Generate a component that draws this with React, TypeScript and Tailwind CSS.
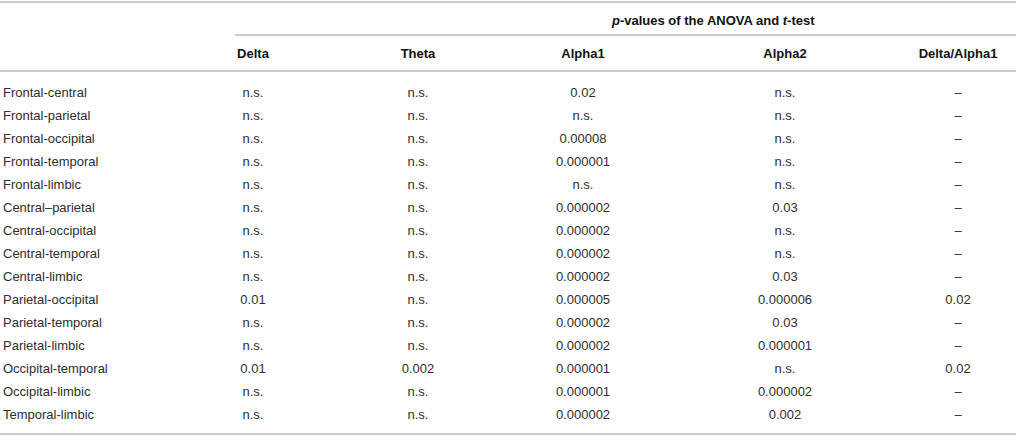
const cols = ["Delta", "Theta", "Alpha1", "Alpha2", "Delta/Alpha1"];

const rows: [string, string, string, string, string, string][] = [
  ["Frontal-central", "n.s.", "n.s.", "0.02", "n.s.", "–"],
  ["Frontal-parietal", "n.s.", "n.s.", "n.s.", "n.s.", "–"],
  ["Frontal-occipital", "n.s.", "n.s.", "0.00008", "n.s.", "–"],
  ["Frontal-temporal", "n.s.", "n.s.", "0.000001", "n.s.", "–"],
  ["Frontal-limbic", "n.s.", "n.s.", "n.s.", "n.s.", "–"],
  ["Central–parietal", "n.s.", "n.s.", "0.000002", "0.03", "–"],
  ["Central-occipital", "n.s.", "n.s.", "0.000002", "n.s.", "–"],
  ["Central-temporal", "n.s.", "n.s.", "0.000002", "n.s.", "–"],
  ["Central-limbic", "n.s.", "n.s.", "0.000002", "0.03", "–"],
  ["Parietal-occipital", "0.01", "n.s.", "0.000005", "0.000006", "0.02"],
  ["Parietal-temporal", "n.s.", "n.s.", "0.000002", "0.03", "–"],
  ["Parietal-limbic", "n.s.", "n.s.", "0.000002", "0.000001", "–"],
  ["Occipital-temporal", "0.01", "0.002", "0.000001", "n.s.", "0.02"],
  ["Occipital-limbic", "n.s.", "n.s.", "0.000001", "0.000002", "–"],
  ["Temporal-limbic", "n.s.", "n.s.", "0.000002", "0.002", "–"],
];

// column centres: 253 / 418 / 583 / 785 / 958
const grid = "grid grid-cols-[170px_166px_164px_166px_238px_108px]";

export default function App() {
  return (
    <div className="w-[1016px] h-[442px] bg-white pt-px font-['Liberation_Sans',Arial,sans-serif] text-[13px] leading-none text-[#2e2e2e]">
      <div className="border-t-2 border-[#cbcbcb]">
        {/* spanning header */}
        <div className="grid grid-cols-[235px_1fr] h-[33px]">
          <div />
          <div className="flex items-center border-b-2 border-[#cbcbcb] pl-[377px] pt-[3px] font-bold text-[#111]">
            <span>
              <i>p</i>-values of the ANOVA and <i>t</i>-test
            </span>
          </div>
        </div>

        {/* column headers */}
        <div className={`${grid} h-[36px] items-center border-b-2 border-[#cbcbcb] font-bold text-[#111]`}>
          <div />
          {cols.map((c) => (
            <div key={c} className="text-center">
              {c}
            </div>
          ))}
        </div>

        {/* body */}
        <div className="pt-[9px] pb-[7px] border-b-2 border-[#cbcbcb]">
          {rows.map((r) => (
            <div key={r[0]} className={`${grid} h-[23px] items-center`}>
              <div className="pl-[3px]">{r[0]}</div>
              {r.slice(1).map((v, i) => (
                <div key={i} className="text-center">
                  {v}
                </div>
              ))}
            </div>
          ))}
        </div>
      </div>
    </div>
  );
}
